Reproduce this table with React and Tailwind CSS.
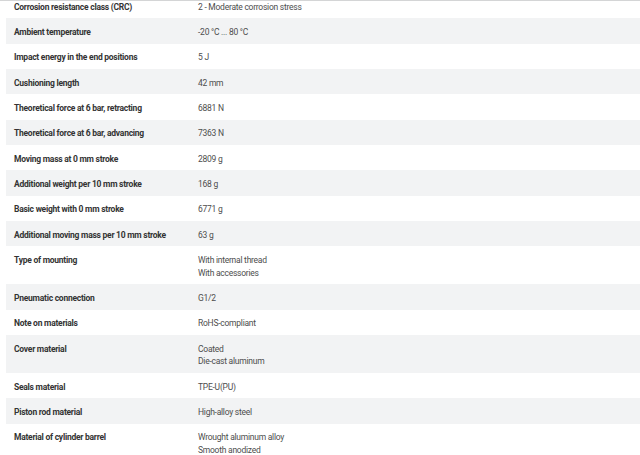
const rows = [
  ['Corrosion resistance class (CRC)', ['2 - Moderate corrosion stress']],
  ['Ambient temperature', ['-20 °C ... 80 °C']],
  ['Impact energy in the end positions', ['5 J']],
  ['Cushioning length', ['42 mm']],
  ['Theoretical force at 6 bar, retracting', ['6881 N']],
  ['Theoretical force at 6 bar, advancing', ['7363 N']],
  ['Moving mass at 0 mm stroke', ['2809 g']],
  ['Additional weight per 10 mm stroke', ['168 g']],
  ['Basic weight with 0 mm stroke', ['6771 g']],
  ['Additional moving mass per 10 mm stroke', ['63 g']],
  ['Type of mounting', ['With internal thread', 'With accessories']],
  ['Pneumatic connection', ['G1/2']],
  ['Note on materials', ['RoHS-compliant']],
  ['Cover material', ['Coated', 'Die-cast aluminum']],
  ['Seals material', ['TPE-U(PU)']],
  ['Piston rod material', ['High-alloy steel']],
  ['Material of cylinder barrel', ['Wrought aluminum alloy', 'Smooth anodized']],
];

export default function App() {
  return (
    <div className="h-[455px] w-[640px] overflow-hidden bg-white border-t border-[#d4d5d6] font-['Roboto',sans-serif] text-[8.5px] tracking-[-0.25px] leading-[12.67px]">
      <div className="-mt-[8px] pl-[6px]">
        {rows.map(([label, values], i) => (
          <div
            key={label}
            className={`grid grid-cols-[192px_1fr] pt-[7.8px] pb-[4.86px] ${i % 2 === 1 ? 'bg-[#f2f3f4]' : 'bg-white'}`}
          >
            <div className="pl-2 font-bold text-[#333333]">{label}</div>
            <div className="text-[#4d4d4d]">
              {values.map(v => (
                <div key={v}>{v}</div>
              ))}
            </div>
          </div>
        ))}
      </div>
    </div>
  );
}
